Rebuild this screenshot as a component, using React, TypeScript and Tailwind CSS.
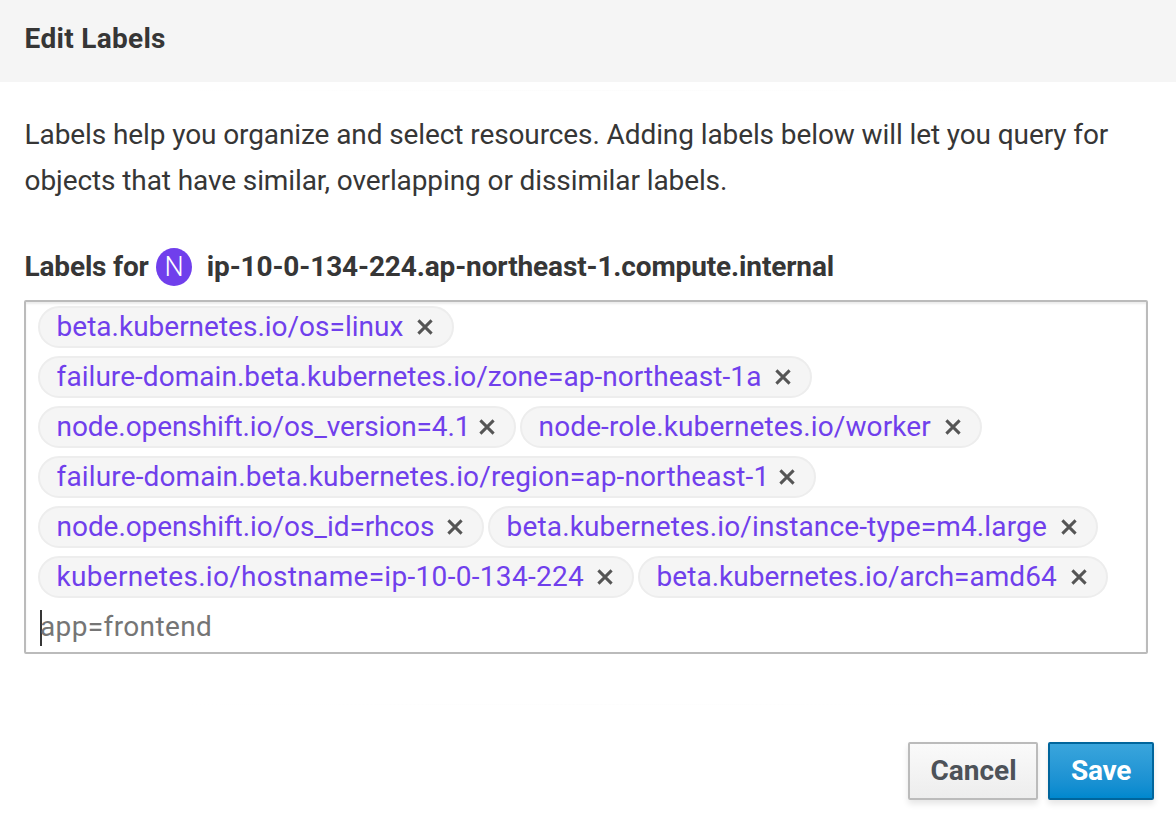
type Label = { text: string; chip: string; spacing: string };

const rows: Label[][] = [
  [{ text: 'beta.kubernetes.io/os=linux', chip: 'w-[416px]', spacing: 'tracking-[0px]' }],
  [{ text: 'failure-domain.beta.kubernetes.io/zone=ap-northeast-1a', chip: 'w-[774px]', spacing: 'tracking-[0.05px]' }],
  [
    { text: 'node.openshift.io/os_version=4.1', chip: 'w-[478px]', spacing: 'tracking-[-0.08px]' },
    { text: 'node-role.kubernetes.io/worker', chip: 'w-[462px]', spacing: 'tracking-[0.11px]' },
  ],
  [{ text: 'failure-domain.beta.kubernetes.io/region=ap-northeast-1', chip: 'w-[778px]', spacing: 'tracking-[0.14px]' }],
  [
    { text: 'node.openshift.io/os_id=rhcos', chip: 'w-[446px]', spacing: 'tracking-[-0.07px]' },
    { text: 'beta.kubernetes.io/instance-type=m4.large', chip: 'w-[610px]', spacing: 'tracking-[0.15px]' },
  ],
  [
    { text: 'kubernetes.io/hostname=ip-10-0-134-224', chip: 'w-[596px]', spacing: 'tracking-[0.31px]' },
    { text: 'beta.kubernetes.io/arch=amd64', chip: 'w-[470px]', spacing: 'tracking-[0.02px]' },
  ],
];

function Chip({ text, chip, spacing }: Label) {
  return (
    <span
      className={`${chip} flex h-[42px] shrink-0 items-center justify-between rounded-full border-2 border-[#ededed] bg-[#f5f5f5] pr-[19px] pl-[16.6px]`}
    >
      <a className={`${spacing} min-w-0 pb-px whitespace-nowrap text-[#703fec]`}>{text}</a>
      <button aria-label="Remove label" className="block shrink-0">
        <svg width="16" height="16" viewBox="0 0 16 16" fill="none" stroke="#555" strokeWidth="3">
          <path d="M1.4 1.4 14.6 14.6M14.6 1.4 1.4 14.6" />
        </svg>
      </button>
    </span>
  );
}

export default function App() {
  return (
    <div className="flex h-[822px] w-[1176px] flex-col bg-white font-['Roboto',sans-serif] text-[28px] text-[#363636]">
      <header className="h-[82px] shrink-0 bg-[#f5f5f5] pt-[22px] pl-[24.6px]">
        <h1 className="leading-[34px] font-bold tracking-[0.3px]">Edit Labels</h1>
      </header>
      <div className="mx-auto mt-2 h-px w-[820px] shrink-0 bg-linear-to-r from-white via-[#fcfcfc] to-white" />
      <main className="pt-[21px] pr-7 pl-6">
        <p className="pl-[0.6px] leading-[46px] whitespace-nowrap">
          <span className="block tracking-[-0.1px]">
            Labels help you organize and select resources. Adding labels below will let you query for
          </span>
          <span className="block tracking-[-0.1px]">objects that have similar, overlapping or dissimilar labels.</span>
        </p>
        <div className="mt-11 flex h-[38px] items-center font-bold whitespace-nowrap">
          <span className="w-[132px] pl-[0.6px] tracking-[-0.18px]">Labels for</span>
          <span className="flex h-[38px] w-9 items-center justify-center rounded-[50%] bg-[#703fec] text-[27px] font-light text-white">
            N
          </span>
          <span className="ml-[14.8px] tracking-[-0.13px]">ip-10-0-134-224.ap-northeast-1.compute.internal</span>
        </div>
        <div className="mt-[14px] flex h-[354px] flex-col gap-2 rounded-[2px] border-2 border-[#bbb] px-3 pt-1 shadow-[inset_0_2px_2px_rgba(3,3,3,0.075)]">
          {rows.map((row) => (
            <div key={row[0].text} className="flex gap-1">
              {row.map((label) => (
                <Chip key={label.text} {...label} />
              ))}
            </div>
          ))}
          <div className="flex h-[42px] items-center pl-0.5">
            <span className="mt-0.5 h-9 w-0.5 bg-[#363636]" />
            <span className="-ml-0.5 pb-px tracking-[0.37px] text-[#757575]">app=frontend</span>
          </div>
        </div>
      </main>
      <div className="mx-auto mt-[50px] h-px w-[820px] shrink-0 bg-linear-to-r from-white via-[#fdfdfd] to-white" />
      <footer className="mt-[37px] flex justify-end gap-[10px] pr-[22px] leading-[34px] font-bold">
        <button className="h-[58px] w-[130px] rounded-[2px] border-2 border-[#bbb] bg-linear-to-b from-[#fafafa] to-[#ededed] pb-px pl-px text-[#4d5258] shadow-[0_4px_6px_rgba(3,3,3,0.1)]">
          Cancel
        </button>
        <button className="h-[58px] w-[106px] rounded-[2px] border-2 border-[#00659c] bg-linear-to-b from-[#39a5dc] to-[#0088ce] pb-px tracking-[-0.3px] text-white shadow-[0_4px_6px_rgba(3,3,3,0.1)]">
          Save
        </button>
      </footer>
    </div>
  );
}
